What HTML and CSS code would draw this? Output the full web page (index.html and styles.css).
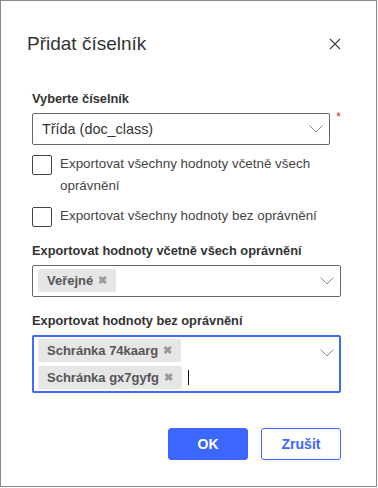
FILE: index.html
```html
<!DOCTYPE html>
<html lang="cs">
<head>
<meta charset="utf-8">
<link rel="stylesheet" href="styles.css">
</head>
<body>
<div class="dialog">
  <div class="header">
    <h1 class="title">Přidat číselník</h1>
    <svg class="close" width="12" height="12" viewBox="0 0 12 12"><path d="M1 1L11 11M11 1L1 11" stroke="#444" stroke-width="1.2" fill="none"/></svg>
  </div>
  <div class="body">
    <div class="label">Vyberte číselník</div>
    <div class="row-req">
      <div class="select">
        <span class="value">Třída (doc_class)</span>
        <svg class="chev" width="14" height="8" viewBox="0 0 14 8"><path d="M0.5 0.5L7 7L13.5 0.5" stroke="#888" stroke-width="1" fill="none"/></svg>
      </div>
      <span class="req">*</span>
    </div>
    <div class="check">
      <span class="box"></span>
      <span class="check-text">Exportovat všechny hodnoty včetně všech oprávnění</span>
    </div>
    <div class="check">
      <span class="box"></span>
      <span class="check-text">Exportovat všechny hodnoty bez oprávnění</span>
    </div>
    <div class="label label-gap">Exportovat hodnoty včetně všech oprávnění</div>
    <div class="multi">
      <div class="tags">
        <span class="tag">Veřejné <span class="x">✖</span></span>
      </div>
      <svg class="chev" width="14" height="8" viewBox="0 0 14 8"><path d="M0.5 0.5L7 7L13.5 0.5" stroke="#888" stroke-width="1" fill="none"/></svg>
    </div>
    <div class="label label-gap">Exportovat hodnoty bez oprávnění</div>
    <div class="multi focus">
      <div class="tags col">
        <span class="tag">Schránka 74kaarg <span class="x">✖</span></span>
        <div class="tagline"><span class="tag">Schránka gx7gyfg <span class="x">✖</span></span><span class="caret"></span></div>
      </div>
      <svg class="chev top" width="14" height="8" viewBox="0 0 14 8"><path d="M0.5 0.5L7 7L13.5 0.5" stroke="#888" stroke-width="1" fill="none"/></svg>
    </div>
  </div>
  <div class="footer">
    <button class="btn primary">OK</button>
    <button class="btn secondary">Zrušit</button>
  </div>
</div>
</body>
</html>
```
FILE: styles.css
```css
html, body {
  margin: 0;
  padding: 0;
  background: #fff;
}
body {
  font-family: "Liberation Sans", Arial, sans-serif;
  color: #333;
}
.dialog {
  box-sizing: border-box;
  width: 377px;
  height: 487px;
  border: 1px solid #8a8a8a;
  background: #fff;
  display: flex;
  flex-direction: column;
}
.header {
  display: flex;
  align-items: center;
  justify-content: space-between;
  padding: 31px 35px 0 26px;
  height: 24px;
}
.title {
  margin: 0;
  font-size: 19px;
  font-weight: normal;
  color: #333;
}
.close {
  display: block;
}
.body {
  padding: 35px 35px 0 31px;
  display: flex;
  flex-direction: column;
}
.label {
  font-size: 12.8px;
  font-weight: bold;
  color: #333;
  line-height: 16px;
  margin-bottom: 6px;
}
.label-gap {
  margin-top: 16px;
}
.row-req {
  display: flex;
  align-items: flex-start;
}
.select {
  box-sizing: border-box;
  width: 309px;
  height: 32px;
  border: 1px solid #666;
  border-radius: 2px;
  display: flex;
  align-items: center;
  justify-content: space-between;
  padding: 0 6px 0 9px;
  font-size: 14.4px;
  color: #333;
}
.req {
  color: #d0222a;
  font-size: 12px;
  line-height: 8px;
  margin-left: 6px;
}
.chev {
  display: block;
}
.check {
  display: flex;
  align-items: flex-start;
  margin-top: 10px;
}
.box {
  box-sizing: border-box;
  width: 20px;
  height: 20px;
  border: 1px solid #444;
  border-radius: 2px;
  flex: none;
}
.check-text {
  margin-left: 8px;
  font-size: 13.4px;
  line-height: 22px;
  margin-top: -2px;
  color: #444;
  width: 262px;
}
.multi {
  box-sizing: border-box;
  width: 309px;
  border: 1px solid #666;
  border-radius: 2px;
  display: flex;
  align-items: center;
  justify-content: space-between;
  padding: 3px 6px 4px 5px;
}
.multi.focus {
  border: 2px solid #3d6bff;
  padding: 2px 5px 2px 4px;
  align-items: flex-start;
}
.chev.top {
  margin-top: 10px;
}
.tags {
  display: flex;
  gap: 4px;
}
.tags.col {
  flex-direction: column;
  align-items: flex-start;
}
.tagline {
  display: flex;
  align-items: center;
}
.tag {
  display: inline-flex;
  align-items: center;
  height: 23px;
  padding: 0 9px;
  background: #e6e6e6;
  border-radius: 2px;
  font-size: 13px;
  font-weight: bold;
  color: #555;
}
.x {
  color: #999;
  font-size: 11px;
  margin-left: 5px;
}
.caret {
  display: inline-block;
  width: 1px;
  height: 15px;
  background: #111;
  margin-left: 6px;
}
.footer {
  display: flex;
  justify-content: flex-end;
  gap: 13px;
  padding: 35px 35px 0 0;
}
.btn {
  box-sizing: border-box;
  width: 80px;
  height: 32px;
  border-radius: 3px;
  font-family: "Liberation Sans", Arial, sans-serif;
  font-size: 14px;
  font-weight: bold;
  cursor: pointer;
}
.primary {
  background: #3b66ff;
  border: 1px solid #3b66ff;
  color: #fff;
}
.secondary {
  background: #fff;
  border: 1px solid #3b66ff;
  color: #3b66ff;
}
```
